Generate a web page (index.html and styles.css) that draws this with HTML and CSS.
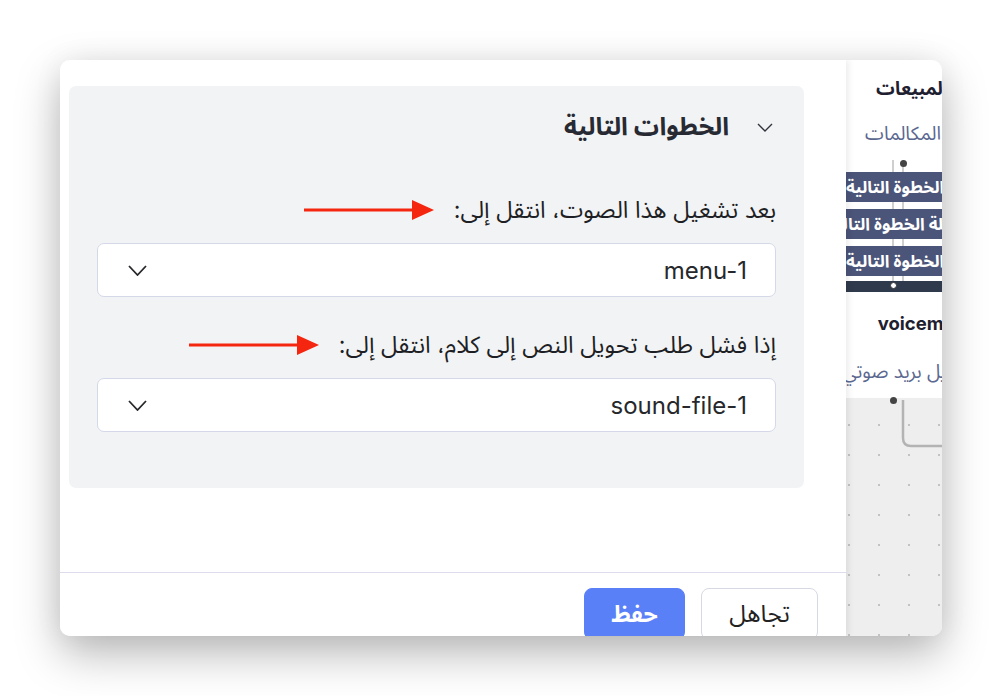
FILE: index.html
```html
<!DOCTYPE html>
<html lang="ar">
<head>
<meta charset="utf-8">
<title>الخطوات التالية</title>
<link rel="stylesheet" href="styles.css">
</head>
<body>
<div class="stage">
  <div class="window">
    <section class="drawer" dir="rtl">
      <div class="drawer-body">
        <div class="panel">
          <div class="panel-head">
            <svg class="chev-sm" viewBox="0 0 16 9"><path d="M1 1 L8 8 L15 1"/></svg>
            <h2>الخطوات التالية</h2>
          </div>
          <div class="field">
            <div class="label-row">
              <span class="label">بعد تشغيل هذا الصوت، انتقل إلى:</span>
              <svg class="arrow" viewBox="0 0 130 20"><path d="M0 10 H112"/><polygon points="108,0 130,10 108,20"/></svg>
            </div>
            <div class="select"><span>menu-1</span><svg class="chev" viewBox="0 0 19 11"><path d="M1 1 L9.5 10 L18 1"/></svg></div>
          </div>
          <div class="field">
            <div class="label-row">
              <span class="label">إذا فشل طلب تحويل النص إلى كلام، انتقل إلى:</span>
              <svg class="arrow" viewBox="0 0 130 20"><path d="M0 10 H112"/><polygon points="108,0 130,10 108,20"/></svg>
            </div>
            <div class="select"><span>sound-file-1</span><svg class="chev" viewBox="0 0 19 11"><path d="M1 1 L9.5 10 L18 1"/></svg></div>
          </div>
        </div>
      </div>
      <div class="drawer-foot">
        <button class="btn btn-ghost">تجاهل</button>
        <button class="btn btn-primary">حفظ</button>
      </div>
    </section>
    <div class="canvas">
      <svg class="wire" viewBox="0 0 100 100" preserveAspectRatio="none"><path d="M57 340 V378 Q57 386 65 386 H120"/></svg>
      <div class="node" dir="rtl">
        <div class="n-title">المبيعات</div>
        <div class="n-sub n-sub1">المكالمات</div>
        <div class="n-ports">
          <div class="n-row">الخطوة التالية</div>
          <div class="n-row">مهلة الخطوة التالية</div>
          <div class="n-row">الخطوة التالية</div>
        </div>
        <div class="n-bar"></div>
        <div class="n-title n-title2">voicemail</div>
        <div class="n-sub n-sub2">تحويل بريد صوتي</div>
        <span class="dot dot-top"></span>
        <span class="dot dot-bar"></span>
        <span class="dot dot-bottom"></span>
      </div>
    </div>
  </div>
</div>
</body>
</html>
```
FILE: styles.css
```css
* { box-sizing: border-box; margin: 0; padding: 0; }
html, body { background: #fff; }
body { font-family: Inter, "Noto Sans Arabic", "DejaVu Sans", sans-serif; }

.stage { padding: 60px; }
.window {
  width: 882px; height: 576px; border-radius: 10px; overflow: hidden;
  display: flex; position: relative; background: #fff;
  box-shadow: 0 18px 45px rgba(0,0,0,.28), 0 0 30px rgba(0,0,0,.06);
}

.drawer {
  width: 786px; flex: none; display: flex; flex-direction: column;
  background: #fff; position: relative; z-index: 2;
  box-shadow: 3px 0 6px rgba(0,0,0,.07);
}
.drawer-body { flex: none; height: 512px; padding: 26px 42px 0 9px; }
.panel { background: #f2f3f5; border-radius: 7px; height: 402px; padding: 0 28px; }
.panel-head { height: 82px; display: flex; align-items: center; gap: 28px; padding-right: 3px; }
.panel-head h2 { font-size: 25px; font-weight: 700; color: #272a33; }
.chev-sm { width: 16px; height: 9px; fill: none; stroke: #30333b; stroke-width: 1.4; }

.field { margin-top: 30px; }
.field + .field { margin-top: 36px; }
.label-row { display: flex; align-items: center; gap: 20px; height: 24px; margin-bottom: 21px; }
.label { font-size: 23.5px; line-height: 24px; color: #1d1f24; white-space: nowrap; }
.arrow { width: 130px; height: 20px; flex: none; }
.arrow path { stroke: #f5260f; stroke-width: 3; }
.arrow polygon { fill: #f5260f; }

.select {
  height: 54px; background: #fff; border: 1px solid #d5d8e8; border-radius: 7px;
  display: flex; align-items: center; justify-content: space-between; padding: 0 28px 0 30px;
}
.select span { font-size: 24px; color: #26282c; }
.chev { width: 19px; height: 11px; fill: none; stroke: #26282c; stroke-width: 1.8; }

.drawer-foot { flex: none; border-top: 1px solid #dcdcee; padding: 15px 28px 0; display: flex; gap: 16px; }
.btn { flex: none; height: 52px; border-radius: 8px; font-family: inherit; font-size: 24px; }
.btn-ghost { width: 117px; background: #fff; border: 1px solid #d6d9e4; color: #222; }
.btn-primary { width: 101px; background: #5a80f7; border: 1px solid #5a80f7; color: #fff; font-weight: 700; font-size: 23px; }

.canvas {
  flex: 1; position: relative;
  background-color: #eeeeee;
  background-image: radial-gradient(circle, #c2c2c2 0 1px, transparent 1.4px);
  background-size: 30px 30px; background-position: -12px -10px;
}
.wire { position: absolute; left: 0; top: 0; width: 100px; height: 100px; overflow: visible; }
.wire path { fill: none; stroke: #b3b3b3; stroke-width: 2.5; vector-effect: non-scaling-stroke; }

.node {
  position: absolute; left: -42px; top: -30px; width: 208px;
  background: #fff; text-align: center; padding: 46px 0 14px;
}
.n-title { font-size: 18.5px; font-weight: 700; line-height: 24px; color: #1e2030; white-space: nowrap; padding-left: 8px; }
.n-sub { font-size: 19px; line-height: 24px; color: #5b6890; margin-top: 22px; white-space: nowrap; }
.n-sub1 { padding-right: 10px; }
.n-ports {
  margin-top: 14px; padding: 12px 0 5px; display: flex; flex-direction: column; gap: 7px;
  background:
    linear-gradient(#cfcfcf, #cfcfcf) 88px 0 / 2px 100% no-repeat,
    linear-gradient(#cfcfcf, #cfcfcf) 98px 0 / 2px 100% no-repeat;
}
.n-row {
  height: 30px; line-height: 30px; background: #4b5479; color: #fff;
  font-weight: 700; font-size: 17px; white-space: nowrap; padding-right: 26px; overflow: hidden;
}
.n-bar { height: 11px; background: #2f3a4c; }
.n-title2 { margin-top: 19px; padding-left: 26px; }
.n-sub2 { margin-top: 25px; }
.dot { position: absolute; width: 7px; height: 7px; border-radius: 50%; background: #444; }
.dot-top { left: 96px; top: 130px; }
.dot-bar { left: 86px; top: 252px; background: #fff; border: 1.5px solid #333; }
.dot-bottom { left: 86px; top: 367px; }
```
